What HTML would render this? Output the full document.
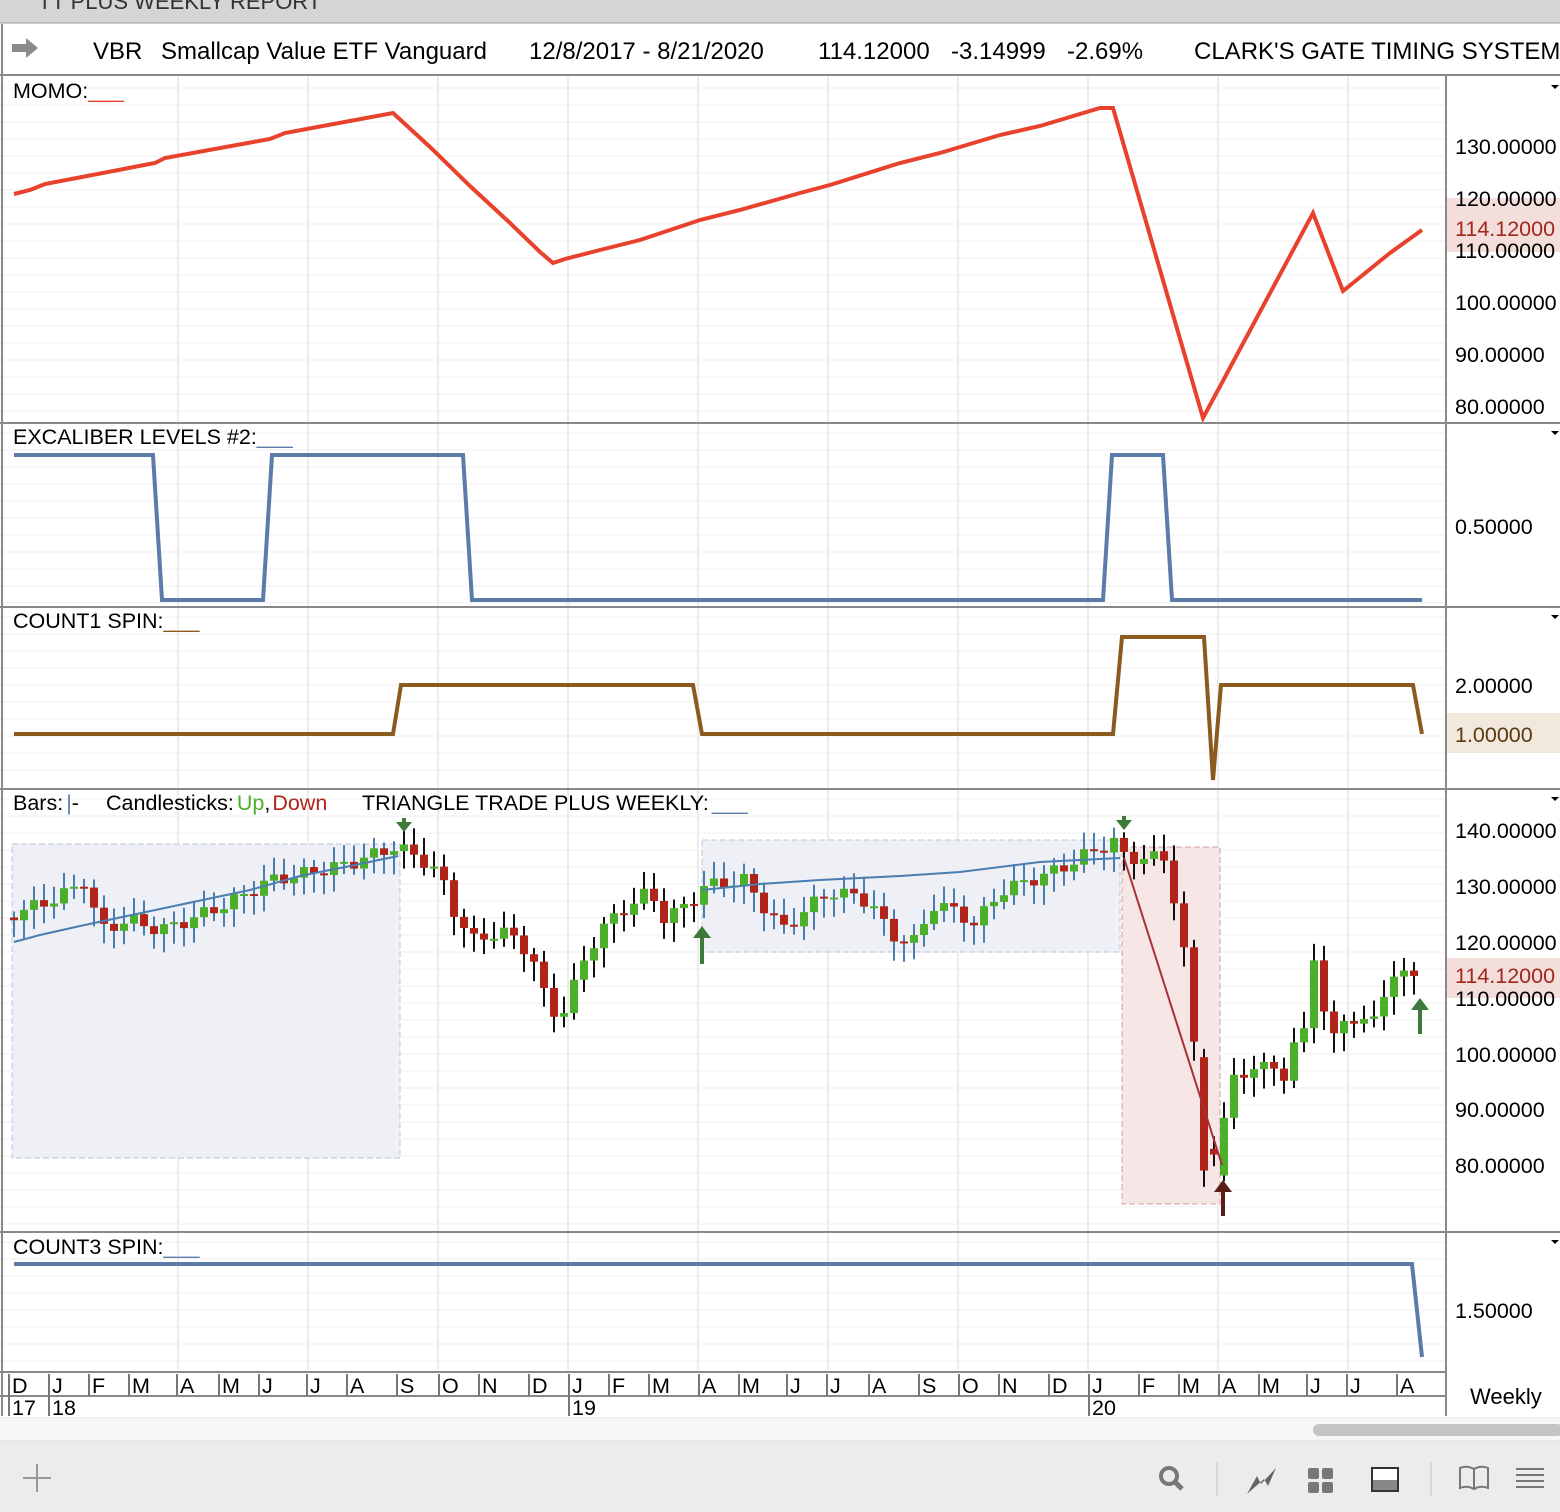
<!DOCTYPE html>
<html><head><meta charset="utf-8"><style>
html,body{margin:0;padding:0;width:1560px;height:1512px;overflow:hidden;background:#fff;font-family:"Liberation Sans",sans-serif}
svg{display:block}
text{font-family:"Liberation Sans",sans-serif}
</style></head><body>
<svg id="s" width="1560" height="1512" viewBox="0 0 1560 1512" xmlns="http://www.w3.org/2000/svg">
<rect x="0" y="0" width="1560" height="23" fill="#d6d5d6"/>
<text x="38" y="9" font-size="22" fill="#333">TT PLUS WEEKLY REPORT</text>
<line x1="0" y1="23" x2="1560" y2="23" fill="none" stroke="#999" stroke-width="1"/>
<g id="grid"></g>
<!-- header -->
<path d="M12,44 h14 v-6 l12,10 l-12,10 v-6 h-14z" fill="#8a8a8a"/>
<text y="59" font-size="24" fill="#000"><tspan x="93">VBR</tspan><tspan x="161">Smallcap Value ETF Vanguard</tspan><tspan x="529">12/8/2017 - 8/21/2020</tspan><tspan x="818">114.12000</tspan><tspan x="951">-3.14999</tspan><tspan x="1067">-2.69%</tspan><tspan x="1194">CLARK'S GATE TIMING SYSTEM</tspan></text>
<g stroke="#888" stroke-width="2"><line x1="0" y1="75" x2="1560" y2="75"/><line x1="0" y1="423" x2="1560" y2="423"/><line x1="0" y1="607" x2="1560" y2="607"/><line x1="0" y1="789" x2="1560" y2="789"/><line x1="0" y1="1232" x2="1560" y2="1232"/><line x1="0" y1="1372" x2="1446" y2="1372"/><line x1="1446" y1="75" x2="1446" y2="1416"/><line x1="2" y1="24" x2="2" y2="1416"/></g>
<!-- labels -->
<g font-size="21.5" fill="#000">
<text x="13" y="98">MOMO:<tspan fill="#e8412c">___</tspan></text>
<text x="13" y="444">EXCALIBER LEVELS #2:<tspan fill="#5b7ba8">___</tspan></text>
<text x="13" y="628">COUNT1 SPIN:<tspan fill="#8a5a1e">___</tspan></text>
<text x="13" y="810">Bars:<tspan fill="#5b7ba8" dx="3">|</tspan>-<tspan x="106">Candlesticks:</tspan><tspan fill="#4caf2a" dx="3">Up</tspan>,<tspan fill="#b0241a" dx="2">Down</tspan><tspan x="362">TRIANGLE TRADE PLUS WEEKLY:</tspan><tspan fill="#5b7ba8" dx="3">___</tspan></text>
<text x="13" y="1254">COUNT3 SPIN:<tspan fill="#5b7ba8">___</tspan></text>
</g>
<!-- right axis values -->
<rect x="1447" y="198" width="113" height="54" fill="#f3dedb"/>
<rect x="1447" y="958" width="113" height="40" fill="#f3dedb"/>
<rect x="1447" y="713" width="113" height="40" fill="#f2e8dc"/>
<g font-size="21.5" fill="#000">
<text x="1455" y="154">130.00000</text><text x="1455" y="206">120.00000</text><text x="1455" y="258">110.00000</text>
<text x="1455" y="310">100.00000</text><text x="1455" y="362">90.00000</text><text x="1455" y="414">80.00000</text>
<text x="1455" y="534">0.50000</text><text x="1455" y="693">2.00000</text>
<text x="1455" y="838">140.00000</text><text x="1455" y="894">130.00000</text><text x="1455" y="950">120.00000</text><text x="1455" y="1006">110.00000</text>
<text x="1455" y="1062">100.00000</text><text x="1455" y="1117">90.00000</text><text x="1455" y="1173">80.00000</text>
<text x="1455" y="1318">1.50000</text>
</g>
<rect x="1447" y="215" width="113" height="28" fill="#f3dedb"/>
<text x="1455" y="236" font-size="21.5" fill="#a0281c">114.12000</text>
<rect x="1447" y="962" width="113" height="26" fill="#f3dedb"/>
<text x="1455" y="983" font-size="21.5" fill="#a0281c">114.12000</text>
<text x="1455" y="742" font-size="21.5" fill="#5a3a10">1.00000</text>
<g fill="#000"><path d="M1551,85h8l-4,4z"/><path d="M1551,431h8l-4,4z"/><path d="M1551,615h8l-4,4z"/><path d="M1551,797h8l-4,4z"/><path d="M1551,1240h8l-4,4z"/></g>
<!-- indicator lines -->
<polyline fill="none" stroke="#e8412c" stroke-width="4" points="14,194 30,190 45,184 155,163 165,158 270,139 285,133 393,113 405,124 430,147 470,186 510,223 540,252 553,263 565,259 600,250 640,240 700,220 740,210 800,193 830,185 900,163 940,153 1000,135 1040,126 1100,108 1113,108 1203,418 1313,213 1343,291 1390,253 1422,230"/>
<polyline fill="none" stroke="#5b7ba8" stroke-width="4" points="14,455 153,455 162,600 263,600 272,455 463,455 472,600 1103,600 1112,455 1163,455 1172,600 1422,600"/>
<polyline fill="none" stroke="#8a5a1e" stroke-width="4" points="14,734 393,734 401,685 693,685 702,734 1113,734 1122,637 1204,637 1213,780 1221,685 1413,685 1422,734"/>
<polyline fill="none" stroke="#5b7ba8" stroke-width="4" points="14,1264 1412,1264 1422,1357"/>
<!-- boxes -->
<rect x="12" y="844" width="388" height="314" fill="#eef0f6" stroke="#b8c4dc" stroke-dasharray="6,3"/>
<rect x="702" y="840" width="418" height="112" fill="#eef0f6" stroke="#b8c4dc" stroke-dasharray="6,3"/>
<rect x="1122" y="847" width="98" height="357" fill="#f6e6e6" stroke="#d4a0a0" stroke-dasharray="6,3"/>
<g id="candles"></g>
<polyline fill="none" stroke="#4a7db0" stroke-width="2" points="14,942 40,935 80,926 160,909 250,890 300,876 350,866 398,856"/>
<polyline fill="none" stroke="#4a7db0" stroke-width="2" points="702,890 760,884 820,880 900,876 960,872 1040,862 1120,858"/>
<line x1="1124" y1="858" x2="1222" y2="1165" stroke="#a8303a" stroke-width="2"/>
<!-- arrows -->
<g fill="#3d7a3a"><path d="M396,822h16l-8,10z"/><rect x="402" y="818" width="4" height="6"/>
<path d="M1116,820h16l-8,10z"/><rect x="1122" y="816" width="4" height="6"/>
<path d="M693,938h18l-9,-12z"/><rect x="700" y="936" width="4" height="28"/>
<path d="M1411,1010h18l-9,-12z"/><rect x="1418" y="1008" width="4" height="26"/></g>
<g fill="#5a1e1a"><path d="M1214,1192h18l-9,-12z"/><rect x="1221" y="1190" width="4" height="26"/></g>
<!-- time axis -->
<line x1="0" y1="1396" x2="1446" y2="1396" stroke="#888" stroke-width="2"/>
<g id="axis" font-size="21.5" fill="#000"></g>
<text x="1470" y="1404" font-size="22" fill="#000">Weekly</text>
<line x1="0" y1="1418" x2="1560" y2="1418" stroke="#e0e0e0"/>
<rect x="0" y="1419" width="1560" height="22" fill="#f7f7f7"/>
<rect x="1313" y="1424" width="250" height="12" rx="6" fill="#c4c4c4"/>
<rect x="0" y="1441" width="1560" height="71" fill="#ececec"/>
<line x1="0" y1="1441" x2="1560" y2="1441" stroke="#dcdcdc"/>
<g stroke="#999" stroke-width="2"><line x1="37" y1="1464" x2="37" y2="1492"/><line x1="23" y1="1478" x2="51" y2="1478"/></g>
<circle cx="1169" cy="1476" r="8" fill="none" stroke="#777" stroke-width="4"/><line x1="1175" y1="1482" x2="1182" y2="1489" stroke="#777" stroke-width="5"/>
<line x1="1217" y1="1462" x2="1217" y2="1496" stroke="#d6d6d6" stroke-width="2"/>
<path d="M1247,1494 l10,-18 l4,8 l15,-16 l-8,18 l-4,-7z" fill="#666"/>
<g fill="#777"><rect x="1308" y="1468" width="11" height="11" rx="2"/><rect x="1322" y="1468" width="11" height="11" rx="2"/><rect x="1308" y="1482" width="11" height="11" rx="2"/><rect x="1322" y="1482" width="11" height="11" rx="2"/></g>
<rect x="1372" y="1468" width="26" height="23" fill="#fff" stroke="#333" stroke-width="2"/><rect x="1373" y="1480" width="24" height="10" fill="#888"/>
<line x1="1431" y1="1462" x2="1431" y2="1496" stroke="#d6d6d6" stroke-width="2"/>
<path d="M1460,1468 q7,-3 14,1 q7,-4 14,-1 v20 q-7,-3 -14,1 q-7,-4 -14,-1z M1474,1469 v20" fill="none" stroke="#777" stroke-width="2"/>
<g stroke="#777" stroke-width="2"><line x1="1516" y1="1469" x2="1544" y2="1469"/><line x1="1516" y1="1475" x2="1544" y2="1475"/><line x1="1516" y1="1481" x2="1544" y2="1481"/><line x1="1516" y1="1487" x2="1544" y2="1487"/></g>
</svg>
<script>
var NS="http://www.w3.org/2000/svg";
function el(p,t,a){var e=document.createElementNS(NS,t);for(var k in a)e.setAttribute(k,a[k]);p.appendChild(e);return e;}
var months=[["D",12],["J",52],["F",92],["M",132],["A",180],["M",222],["J",262],["J",310],["A",350],["S",400],["O",442],["N",482],["D",532],["J",572],["F",612],["M",652],["A",702],["M",742],["J",790],["J",830],["A",872],["S",922],["O",962],["N",1002],["D",1052],["J",1092],["F",1142],["M",1182],["A",1222],["M",1262],["J",1310],["J",1350],["A",1400]];
var g=document.getElementById("grid"),ax=document.getElementById("axis");
[[80,420],[425,605],[609,787],[791,1230],[1234,1370]].forEach(function(r){for(var y=r[0]+8;y<r[1];y+=17)el(g,"line",{x1:0,x2:1446,y1:y,y2:y,stroke:"#efefef"});});
[178,308,438,568,698,828,958,1088,1218,1348].forEach(function(x){el(g,"line",{x1:x,x2:x,y1:77,y2:1370,stroke:"#ececec","stroke-width":2});});
months.forEach(function(m){var x=m[1];el(ax,"line",{x1:x-3,x2:x-3,y1:1374,y2:1396,stroke:"#777","stroke-width":2});var t=el(ax,"text",{x:x,y:1393});t.textContent=m[0];});
[["17",12],["18",52],["19",572],["20",1092]].forEach(function(m){el(ax,"line",{x1:m[1]-3,x2:m[1]-3,y1:1396,y2:1416,stroke:"#777","stroke-width":2});var t=el(ax,"text",{x:m[1],y:1415});t.textContent=m[0];});
var kp=[[14,125],[60,128],[85,131],[100,122],[130,124],[160,122],[190,124],[230,127],[270,131],[300,132],[350,134],[395,137],[420,135],[440,132],[455,125],[475,120],[500,122],[520,120],[535,116],[545,110],[555,107],[565,108],[585,117],[600,122],[625,126],[650,129],[665,124],[690,127],[705,130],[745,131],[765,126],[785,122],[800,125],[830,129],[860,128],[875,126],[890,121],[915,120],[935,127],[960,125],[975,123],[1000,129],[1030,131],[1060,133],[1090,136],[1115,138],[1125,135],[1140,135],[1165,135],[1175,127],[1185,117],[1195,100],[1205,78],[1215,82],[1225,88],[1235,98],[1250,95],[1270,100],[1285,94],[1295,102],[1305,106],[1315,118],[1325,105],[1335,104],[1345,107],[1355,104],[1365,106],[1385,110],[1405,116],[1422,113]];
function P(x){for(var i=1;i<kp.length;i++){if(x<=kp[i][0]){var a=kp[i-1],b=kp[i];return a[1]+(b[1]-a[1])*(x-a[0])/(b[0]-a[0]);}}return 113;}
function Y(p){return 830+(140-p)*5.583;}
var c=document.getElementById("candles"),prev=P(4);
for(var x=14;x<=1422;x+=10){var cl=P(x)+Math.sin(x*1.7)*1.2;var op=prev;if(x>1200&&x<1230)op=prev+Math.sin(x)*4;
var hi=Math.max(op,cl)+1+Math.abs(Math.sin(x*0.9))*2,lo=Math.min(op,cl)-1-Math.abs(Math.cos(x*1.3))*2.5;
var inbox=(x<400)||(x>702&&x<1120);
el(c,"line",{x1:x,x2:x,y1:Y(hi),y2:Y(lo),stroke:inbox?"#4a7db0":"#111","stroke-width":2});
var t=Y(Math.max(op,cl)),b=Y(Math.min(op,cl));if(b-t<2)b=t+2;
el(c,"rect",{x:x-4,y:t,width:8,height:b-t,fill:cl>=op?"#4caf2a":"#b0241a"});prev=cl;}
</script>
</body></html>
